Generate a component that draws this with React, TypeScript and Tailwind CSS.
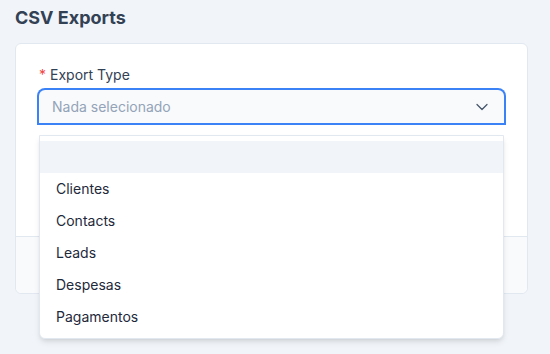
import { ChevronDown } from 'lucide-react';

const options = ['Clientes', 'Contacts', 'Leads', 'Despesas', 'Pagamentos'];

export default function App() {
  return (
    <div className="min-h-screen bg-[#f1f5f9] px-[15px] pt-[4px] font-['Inter',sans-serif]">
      <h1 className="text-lg leading-7 font-bold text-[#334155]">CSV Exports</h1>

      <div className="mt-[11px] w-[513px] rounded-md border border-[#e2e8f0] bg-white">
        <div className="px-[23px] pt-[21px] pb-[113px]">
          <label className="block text-sm leading-5 text-[#334155]">
            <span className="mr-1 text-[#ef4444]">*</span>
            Export Type
          </label>
          <div className="relative mt-[5px]">
            <button className="flex h-[33px] w-full items-center justify-between rounded-t-md bg-[#f8fafc] pr-[12px] pl-[13px] ring-2 ring-[#3b82f6]">
              <span className="text-sm text-[#94a3b8]">Nada selecionado</span>
              <ChevronDown className="h-5 w-5 text-[#475569]" strokeWidth={1.5} />
            </button>

            <ul className="absolute top-[45px] right-0 left-0 z-10 rounded-b-md border border-[#e2e8f0] bg-white py-[5px] shadow-md">
              <li className="h-8 bg-[#f1f5f9]" />
              {options.map((o) => (
                <li key={o} className="flex h-8 items-center px-[16px] text-sm text-[#1e293b]">
                  {o}
                </li>
              ))}
            </ul>
          </div>
        </div>
        <div className="h-[57px] rounded-b-md border-t border-[#e2e8f0] bg-[#f8fafc]" />
      </div>
    </div>
  );
}
